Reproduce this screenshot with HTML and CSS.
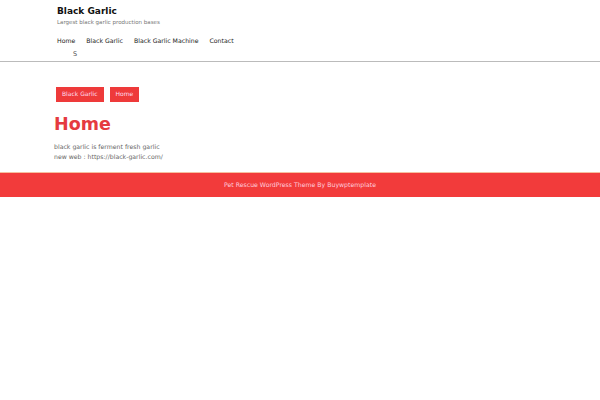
FILE: index.html
```html
<!DOCTYPE html>
<html lang="en">
<head>
    <meta charset="UTF-8">
    <title>Black Garlic</title>
    <link rel="stylesheet" href="styles.css">
</head>
<body>
    <header class="site-header">
        <div class="wrap">
            <div class="brand">
                <h1 class="site-title">Black Garlic</h1>
                <p class="tagline">Largest black garlic production bases</p>
            </div>
            <nav class="menu">
                <a href="#">Home</a>
                <a href="#">Black Garlic</a>
                <a href="#">Black Garlic Machine</a>
                <a href="#">Contact</a>
            </nav>
            <div class="search-toggle">S</div>
        </div>
    </header>

    <main class="wrap content">
        <div class="crumbs">
            <span class="crumb">Black Garlic</span>
            <span class="crumb">Home</span>
        </div>
        <h2 class="page-title">Home</h2>
        <p class="entry">black garlic is ferment fresh garlic<br>new web : https://black-garlic.com/</p>
    </main>

    <footer class="site-footer">
        Pet Rescue WordPress Theme By Buywptemplate
    </footer>
</body>
</html>
```

FILE: styles.css
```css
body {
    margin: 0;
    font-family: 'DejaVu Sans', sans-serif;
    color: #333;
    background: #fff;
}

.wrap {
    width: 492px;
    margin: 0 auto;
}

.site-header {
    border-bottom: 1px solid #bbb;
}

.site-header .wrap {
    padding-left: 6px;
}

.brand {
    padding-top: 5px;
}

.site-title {
    margin: 0;
    font-size: 9px;
    line-height: 12px;
    color: #111;
}

.tagline {
    margin: 2px 0 0;
    font-size: 5.5px;
    color: #777;
}

.menu {
    display: flex;
    gap: 11px;
    margin-top: 12px;
}

.menu a {
    font-size: 6.2px;
    color: #222;
    text-decoration: none;
}

.search-toggle {
    font-size: 6.5px;
    color: #555;
    margin: 6px 0 0 16px;
    height: 11px;
}

.content {
    padding-top: 25px;
}

.crumbs {
    display: flex;
    gap: 6px;
    margin-left: 2px;
}

.crumb {
    background: #ee3a3a;
    color: #fde;
    font-size: 6px;
    padding: 3px 6px 4px;
    line-height: 8px;
}

.page-title {
    margin: 10px 0 0;
    font-size: 17.5px;
    line-height: 24px;
    color: #e53a40;
}

.entry {
    margin: 6px 0 10px;
    font-size: 6.2px;
    line-height: 10px;
    color: #666;
}

.site-footer {
    background: #f23b3b;
    border-top: 1px solid #f6c0a0;
    color: #fcd;
    font-size: 6.2px;
    text-align: center;
    padding: 8px 0 9px;
}
```
